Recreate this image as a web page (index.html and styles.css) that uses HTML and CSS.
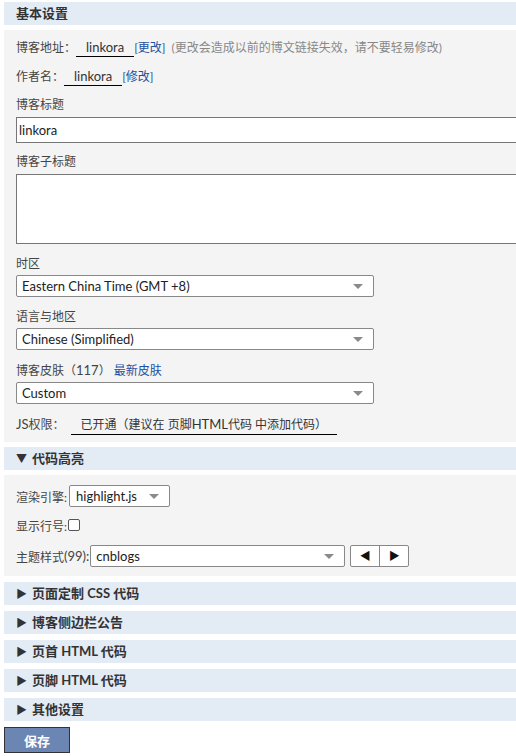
FILE: index.html
```html
<!DOCTYPE html>
<html lang="zh-CN">
<head>
    <meta charset="UTF-8">
    <meta name="viewport" content="width=device-width, initial-scale=1.0">
    <title>博客设置</title>
    <link rel="stylesheet" href="styles.css">
</head>
<body>

    <div class="settings">
        <div class="block">
            <div class="block-title">基本设置</div>
            <div class="block-body">
                <div class="row">
                    博客地址：<span class="under">linkora</span><a href="#">[更改]</a>
                    <span class="note">(更改会造成以前的博文链接失效，请不要轻易修改)</span>
                </div>
                <div class="row">
                    作者名：<span class="under">linkora</span><a href="#">[修改]</a>
                </div>
                <div class="field">
                    <div class="label">博客标题</div>
                    <input type="text" class="text-input" value="linkora">
                </div>
                <div class="field tall">
                    <div class="label">博客子标题</div>
                    <textarea class="text-area"></textarea>
                </div>
                <div class="field pick">
                    <div class="label">时区</div>
                    <div class="select wide">Eastern China Time (GMT +8)</div>
                </div>
                <div class="field pick">
                    <div class="label">语言与地区</div>
                    <div class="select wide">Chinese (Simplified)</div>
                </div>
                <div class="field pick">
                    <div class="label">博客皮肤（<span class="num">117</span>） <a href="#">最新皮肤</a></div>
                    <div class="select wide">Custom</div>
                </div>
                <div class="row last">
                    <span class="num">JS</span>权限：<span class="under js">已开通（建议在 页脚<span class="num">HTML</span>代码 中添加代码）</span>
                </div>
            </div>
        </div>

        <div class="block">
            <div class="block-title"><span class="arrow">▼</span>代码高亮</div>
            <div class="block-body code">
                <div class="inline-row">
                    渲染引擎:<div class="select engine">highlight.js</div>
                </div>
                <div class="inline-row">
                    显示行号:<span class="checkbox"></span>
                </div>
                <div class="inline-row">
                    主题样式<span class="num">(99):</span><div class="select theme">cnblogs</div>
                    <div class="pager"><span>◀</span><span>▶</span></div>
                </div>
            </div>
        </div>

        <div class="block"><div class="block-title"><span class="arrow">▶</span>页面定制 CSS 代码</div></div>
        <div class="block"><div class="block-title"><span class="arrow">▶</span>博客侧边栏公告</div></div>
        <div class="block"><div class="block-title"><span class="arrow">▶</span>页首 HTML 代码</div></div>
        <div class="block"><div class="block-title"><span class="arrow">▶</span>页脚 HTML 代码</div></div>
        <div class="block"><div class="block-title"><span class="arrow">▶</span>其他设置</div></div>

        <button class="save">保存</button>
    </div>

</body>
</html>
```

FILE: styles.css
```css
html {
    overflow: hidden;
}
body {
    margin: 0;
    padding: 2px 0 0 4px;
    background: #fff;
    font-family: Lato, "Noto Sans CJK SC", sans-serif;
    font-size: 13px;
    color: #444;
}
.settings {
    width: 600px;
}
.block {
    margin-bottom: 6px;
}
.block:first-child {
    margin-bottom: 5px;
}
.block-title {
    height: 23px;
    line-height: 23px;
    padding-left: 12px;
    background: #e3ebf5;
    font-weight: bold;
    color: #333;
}
.arrow {
    display: inline-block;
    width: 16px;
    font-size: 11px;
    color: #333;
}
.block-body {
    margin-top: 5px;
    background: #f4f4f4;
    padding: 8px 12px 7px;
    font-size: 12px;
}
.num {
    font-size: 13px;
}
.row {
    line-height: 20px;
    margin-bottom: 9px;
}
.row + .field {
    margin-top: -1px;
}
.row.last {
    margin-top: 2px;
    margin-bottom: 0;
}
.under {
    display: inline-block;
    line-height: 18px;
    padding: 0 10px;
    border-bottom: 1px solid #000;
    color: #333;
    font-size: 13px;
}
.under.js {
    margin-left: 6px;
    font-size: 12px;
    padding-right: 10px;
}
a {
    color: #1f4f9e;
    text-decoration: none;
}
.note {
    color: #888;
    margin-left: 3px;
}
.field {
    margin-bottom: 9px;
}
.field.tall {
    margin-bottom: 10px;
}
.field.pick {
    margin-top: 1px;
    margin-bottom: 10px;
}
.label {
    line-height: 20px;
    margin-bottom: 2px;
}
.pick .label {
    margin-bottom: 1px;
}
.text-input {
    display: block;
    box-sizing: border-box;
    width: 100%;
    height: 26px;
    padding: 0 2px;
    border: 1px solid #767676;
    font: inherit;
    font-size: 13px;
    color: #222;
    background: #fff;
}
.text-area {
    display: block;
    box-sizing: border-box;
    width: 100%;
    height: 70px;
    border: 1px solid #767676;
    resize: none;
    background: #fff;
}
.select {
    position: relative;
    box-sizing: border-box;
    height: 22px;
    line-height: 20px;
    padding-left: 5px;
    border: 1px solid #888;
    border-radius: 2px;
    background: #fff;
    color: #222;
    font-size: 13px;
}
.select::after {
    content: "";
    position: absolute;
    right: 10px;
    top: 8px;
    border-left: 5px solid transparent;
    border-right: 5px solid transparent;
    border-top: 5px solid #8a8a8a;
}
.select.wide {
    width: 358px;
}
.code {
    padding: 10px 12px 9px;
}
.inline-row {
    display: flex;
    align-items: center;
    height: 22px;
    margin-bottom: 7px;
}
.inline-row + .inline-row {
    margin-bottom: 9px;
}
.inline-row:last-child {
    margin-bottom: 0;
}
.select.engine {
    width: 101px;
    margin-left: 2px;
    padding-left: 6px;
}
.select.theme {
    width: 255px;
    margin-left: 1px;
}
.checkbox {
    display: inline-block;
    box-sizing: border-box;
    width: 12px;
    height: 12px;
    margin-left: 1px;
    border: 1px solid #555;
    border-radius: 2px;
    background: #fff;
}
.pager {
    display: flex;
    margin-left: 5px;
    height: 22px;
    box-sizing: border-box;
    border: 1px solid #888;
    border-radius: 2px;
    background: #fff;
}
.pager span {
    width: 28px;
    text-align: center;
    line-height: 20px;
    font-size: 11px;
    color: #111;
}
.pager span + span {
    border-left: 1px solid #888;
}
.save {
    display: block;
    margin-top: 2px;
    width: 66px;
    height: 26px;
    border: 1px solid #333;
    background: #6b86b3;
    color: #fff;
    font-family: inherit;
    font-size: 13px;
    font-weight: bold;
}
```
